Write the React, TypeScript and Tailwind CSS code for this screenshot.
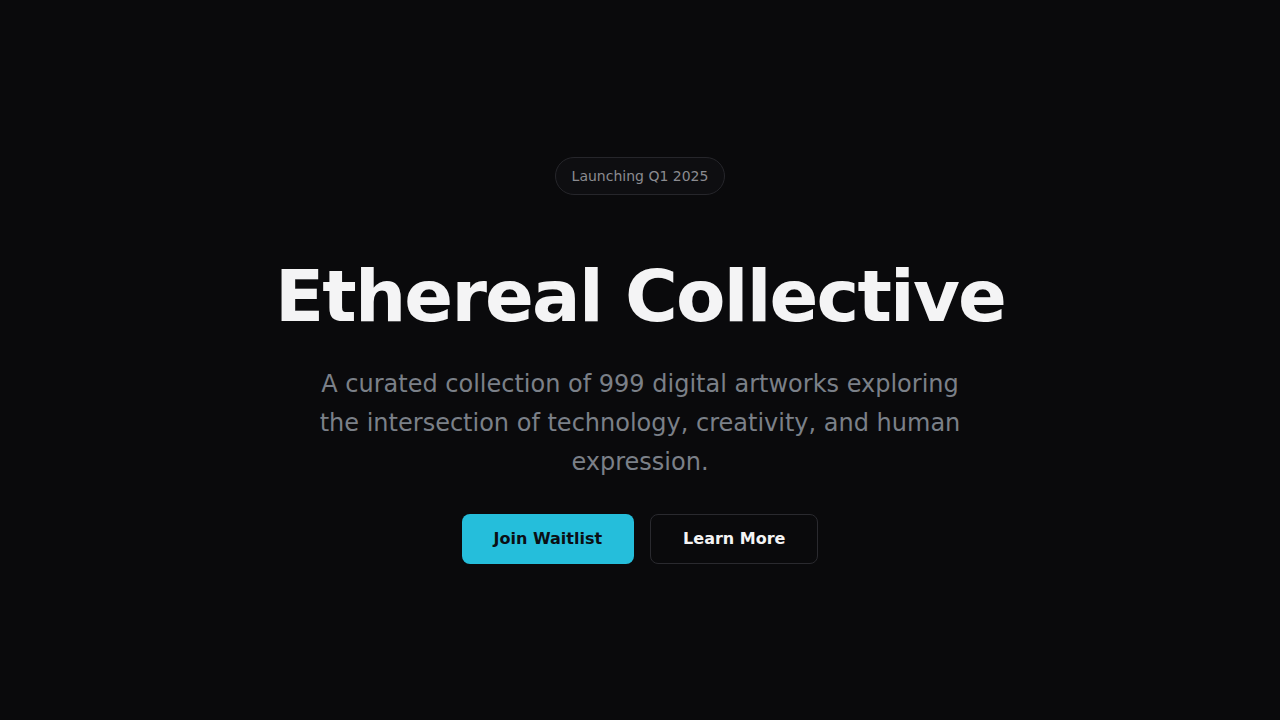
export default function App() {
  return (
    <div
      className="min-h-screen w-full bg-[#0a0a0c] flex flex-col items-center justify-center text-center"
      style={{ fontFamily: '"DejaVu Sans", sans-serif' }}
    >
      <div className="rounded-full border border-[#26262b] bg-[#0e0e11] px-4 py-2 text-sm text-[#8b8b90] mb-[65px]">
        Launching Q1 2025
      </div>
      <h1 className="text-7xl leading-none font-bold tracking-tight text-[#f4f4f5] mb-[33px]">Ethereal Collective</h1>
      <p className="max-w-[672px] text-2xl leading-relaxed text-[#7b8088] mb-8">
        A curated collection of 999 digital artworks exploring the intersection of technology, creativity, and human expression.
      </p>
      <div className="flex gap-4">
        <button className="rounded-lg bg-[#25bedb] px-8 py-[13px] text-base font-bold text-[#0b0f14]">
          Join Waitlist
        </button>
        <button className="rounded-lg border border-[#2a2a2f] bg-[#0a0a0c] px-8 py-3 text-base font-bold text-[#f4f4f5]">
          Learn More
        </button>
      </div>
    </div>
  );
}
